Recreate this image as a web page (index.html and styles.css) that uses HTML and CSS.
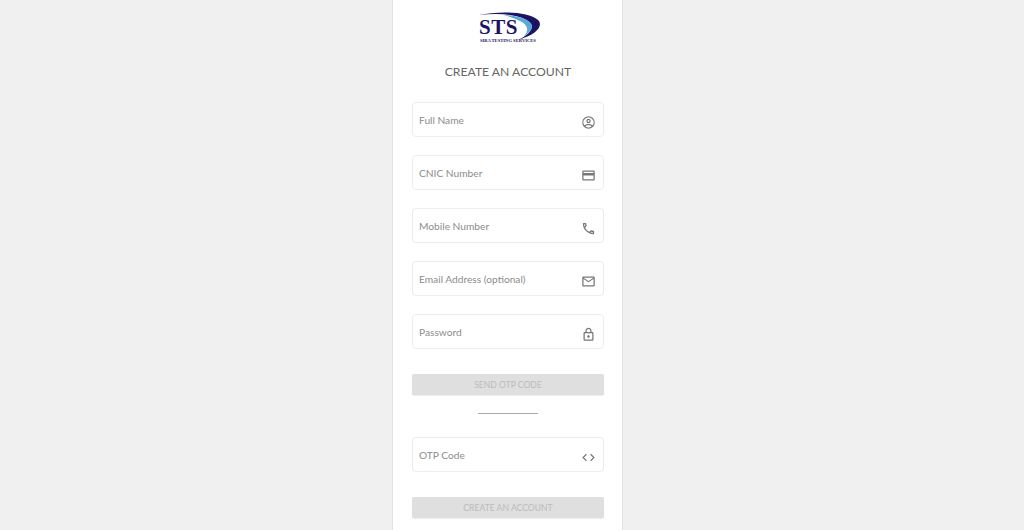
FILE: index.html
```html
<!DOCTYPE html>
<html lang="en">
<head>
    <meta charset="UTF-8">
    <meta name="viewport" content="width=device-width, initial-scale=1.0">
    <title>Create an Account</title>
    <link rel="stylesheet" href="styles.css">
</head>
<body>

<div class="card">
    <!-- Logo -->
    <div class="logo">
        <svg class="logo-swoosh" width="65" height="32" viewBox="0 0 65 32">
            <path d="M1 3 C20 -1 50 -1 60 8 C66 14 58 23 40 28 C52 22 58 15 50 9 C40 2 20 1 1 3 Z" fill="#1b1464"/>
            <path d="M26 3 C42 4 52 8 54 13 C55 17 50 22 46 24 C51 19 50 14 44 10 C38 7 32 5 26 3 Z" fill="#5aa9d6"/>
        </svg>
        <span class="logo-name">STS</span>
        <span class="logo-sub">SIBA TESTING SERVICES</span>
    </div>

    <h1 class="title">CREATE AN ACCOUNT</h1>

    <div class="field">
        <span class="field-label">Full Name</span>
        <svg class="field-icon" viewBox="0 0 24 24"><path d="M12 2a10 10 0 1 0 0 20 10 10 0 0 0 0-20zM7.100 18.300c.4-.9 3-1.800 4.900-1.800s4.500.9 4.900 1.800A8 8 0 0 1 12 20a8 8 0 0 1-4.900-1.700zm11.200-1.400c-1.400-1.800-4.900-2.400-6.300-2.400s-4.900.6-6.300 2.400a8 8 0 1 1 12.600 0zM12 6a3.500 3.500 0 1 0 0 7 3.500 3.500 0 0 0 0-7zm0 5a1.500 1.500 0 1 1 0-3 1.500 1.500 0 0 1 0 3z"/></svg>
    </div>
    <div class="field">
        <span class="field-label">CNIC Number</span>
        <svg class="field-icon" viewBox="0 0 24 24"><path d="M20 4H4c-1.100 0-2 .9-2 2v12c0 1.100.9 2 2 2h16c1.100 0 2-.9 2-2V6c0-1.100-.9-2-2-2zm0 14H4v-6h16v6zm0-10H4V6h16v2z"/></svg>
    </div>
    <div class="field">
        <span class="field-label">Mobile Number</span>
        <svg class="field-icon" viewBox="0 0 24 24"><path d="M6.540 5c.06.890.210 1.760.450 2.590l-1.200 1.200c-.410-1.200-.670-2.470-.760-3.790h1.510m9.860 12.020c.850.240 1.720.390 2.600.450v1.490c-1.320-.090-2.590-.350-3.800-.750l1.200-1.190M7.500 3H4c-.550 0-1 .450-1 1 0 9.390 7.610 17 17 17 .550 0 1-.450 1-1v-3.490c0-.550-.450-1-1-1-1.240 0-2.450-.200-3.570-.570-.100-.040-.210-.050-.310-.050-.260 0-.510.100-.710.290l-2.200 2.200c-2.830-1.450-5.150-3.760-6.590-6.590l2.200-2.200c.280-.280.360-.670.250-1.020C8.700 6.450 8.500 5.250 8.500 4c0-.550-.450-1-1-1z"/></svg>
    </div>
    <div class="field">
        <span class="field-label">Email Address (optional)</span>
        <svg class="field-icon" viewBox="0 0 24 24"><path d="M22 6c0-1.100-.9-2-2-2H4c-1.100 0-2 .9-2 2v12c0 1.100.9 2 2 2h16c1.100 0 2-.9 2-2V6zm-2 0l-8 5-8-5h16zm0 12H4V8l8 5 8-5v10z"/></svg>
    </div>
    <div class="field">
        <span class="field-label">Password</span>
        <svg class="field-icon" viewBox="0 0 24 24"><path d="M18 8h-1V6c0-2.760-2.240-5-5-5S7 3.240 7 6v2H6c-1.100 0-2 .9-2 2v10c0 1.100.9 2 2 2h12c1.100 0 2-.9 2-2V10c0-1.100-.9-2-2-2zM9 6c0-1.660 1.340-3 3-3s3 1.340 3 3v2H9V6zm9 14H6V10h12v10zm-6-3c1.100 0 2-.9 2-2s-.9-2-2-2-2 .9-2 2 .9 2 2 2z"/></svg>
    </div>

    <button class="btn btn-otp" disabled>SEND OTP CODE</button>
    <div class="divider"></div>

    <div class="field field-otp">
        <span class="field-label">OTP Code</span>
        <svg class="field-icon" viewBox="0 0 24 24"><path d="M9.400 16.600L4.800 12l4.600-4.600L8 6l-6 6 6 6 1.400-1.400zm5.200 0l4.600-4.600-4.600-4.600L16 6l6 6-6 6-1.400-1.400z"/></svg>
    </div>

    <button class="btn btn-create" disabled>CREATE AN ACCOUNT</button>
</div>

</body>
</html>
```

FILE: styles.css
```css
html, body {
    height: 100%;
    overflow: hidden;
}
body {
    font-family: Lato, "Open Sans", sans-serif;
    background-color: #f0f0f0;
    margin: 0;
}
.card {
    box-sizing: border-box;
    width: 231px;
    height: 100%;
    margin-left: 392px;
    padding: 0 18px 0 19px;
    background-color: white;
    border-left: 1px solid #e2e2e2;
    border-right: 1px solid #e2e2e2;
    display: flex;
    flex-direction: column;
}
/* Logo */
.logo {
    position: relative;
    height: 46px;
    flex-shrink: 0;
}
.logo-swoosh {
    position: absolute;
    left: 66px;
    top: 12px;
}
.logo-name {
    position: absolute;
    left: 67px;
    top: 16px;
    font-family: "Liberation Serif", serif;
    font-weight: bold;
    font-size: 21px;
    line-height: 22px;
    letter-spacing: 0.5px;
    color: #1b1464;
}
.logo-sub {
    position: absolute;
    left: 68px;
    top: 38px;
    font-family: "Liberation Serif", serif;
    font-weight: bold;
    font-size: 4.600px;
    line-height: 6px;
    white-space: nowrap;
    color: #1b1464;
}
.title {
    margin: 18px 0 22px;
    font-size: 12.200px;
    line-height: 16px;
    font-weight: normal;
    text-align: center;
    color: #666;
}
/* Input rows */
.field {
    box-sizing: border-box;
    height: 35px;
    margin-bottom: 18px;
    padding: 0 6px 0 6px;
    flex-shrink: 0;
    border: 1px solid #ececec;
    border-radius: 4px;
    display: flex;
    justify-content: space-between;
    align-items: center;
    background-color: white;
}
.field-label {
    font-size: 10.200px;
    color: #8c8c8c;
}
.field-icon {
    width: 15px;
    height: 15px;
    margin-top: 5px;
    margin-right: 1px;
    fill: #777;
}
.btn {
    height: 21px;
    padding: 0;
    flex-shrink: 0;
    border: none;
    border-radius: 2px;
    background-color: #dfdfdf;
    color: #bbb;
    font-family: inherit;
    font-size: 8.600px;
    box-shadow: 0 1px 1px rgba(0, 0, 0, 0.08);
}
.btn-otp {
    margin-top: 7px;
}
.divider {
    width: 60px;
    height: 1px;
    margin: 18px auto 23px;
    flex-shrink: 0;
    background-color: #aaa;
}
.field-otp {
    margin-bottom: 25px;
}
```
